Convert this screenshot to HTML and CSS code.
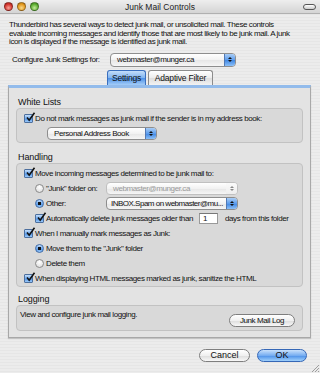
FILE: index.html
```html
<!DOCTYPE html>
<html lang="en">
<head>
  <meta charset="UTF-8" />
  <title>Junk Mail Controls</title>
  <link rel="stylesheet" href="styles.css">
</head>
<body>
  <div class="window">
    <div class="titlebar">
      <div class="lights">
        <span class="light red"></span>
        <span class="light yellow"></span>
        <span class="light green"></span>
      </div>
      <div class="title">Junk Mail Controls</div>
      <span class="pill"></span>
    </div>

    <div class="content">
      <p class="intro">Thunderbird has several ways to detect junk mail, or unsolicited mail. These controls<br>evaluate incoming messages and identify those that are most likely to be junk mail. A junk<br>icon is displayed if the message is identified as junk mail.</p>

      <div class="config">
        <span class="config-label">Configure Junk Settings for:</span>
        <div class="popup popup-account">
          <span class="popup-text">webmaster@munger.ca</span>
          <span class="popup-arrows"><i class="up"></i><i class="down"></i></span>
        </div>
      </div>

      <div class="tabs">
        <span class="tab active">Settings</span>
        <span class="tab">Adaptive Filter</span>
      </div>

      <div class="panel">
        <div class="section-title">White Lists</div>
        <div class="group group-white">
          <div class="row">
            <span class="check on"><svg width="11" height="11" viewBox="0 0 11 11"><path d="M2 5.5 L4.2 8.2 L9.5 0.8" fill="none" stroke="#111" stroke-width="1.6"/></svg></span>
            <span>Do not mark messages as junk mail if the sender is in my address book:</span>
          </div>
          <div class="row sub">
            <div class="popup popup-book">
              <span class="popup-text">Personal Address Book</span>
              <span class="popup-arrows"><i class="up"></i><i class="down"></i></span>
            </div>
          </div>
        </div>

        <div class="section-title gap-big">Handling</div>
        <div class="group group-handling">
          <div class="row">
            <span class="check on"><svg width="11" height="11" viewBox="0 0 11 11"><path d="M2 5.5 L4.2 8.2 L9.5 0.8" fill="none" stroke="#111" stroke-width="1.6"/></svg></span>
            <span>Move incoming messages determined to be junk mail to:</span>
          </div>
          <div class="row sub">
            <span class="radio"></span>
            <span class="radio-label">"Junk" folder on:</span>
            <div class="popup popup-folder disabled">
              <span class="popup-text">webmaster@munger.ca</span>
              <span class="popup-arrows"><i class="up"></i><i class="down"></i></span>
            </div>
          </div>
          <div class="row sub">
            <span class="radio on"></span>
            <span class="radio-label">Other:</span>
            <div class="popup popup-folder">
              <span class="popup-text tight">INBOX.Spam on webmaster@mu...</span>
              <span class="popup-arrows"><i class="up"></i><i class="down"></i></span>
            </div>
          </div>
          <div class="row sub">
            <span class="check on"><svg width="11" height="11" viewBox="0 0 11 11"><path d="M2 5.5 L4.2 8.2 L9.5 0.8" fill="none" stroke="#111" stroke-width="1.6"/></svg></span>
            <span>Automatically delete junk messages older than</span>
            <span class="days-input">1</span>
            <span class="days-label">days from this folder</span>
          </div>
          <div class="row">
            <span class="check on"><svg width="11" height="11" viewBox="0 0 11 11"><path d="M2 5.5 L4.2 8.2 L9.5 0.8" fill="none" stroke="#111" stroke-width="1.6"/></svg></span>
            <span>When I manually mark messages as Junk:</span>
          </div>
          <div class="row sub">
            <span class="radio on"></span>
            <span>Move them to the "Junk" folder</span>
          </div>
          <div class="row sub">
            <span class="radio"></span>
            <span>Delete them</span>
          </div>
          <div class="row">
            <span class="check on"><svg width="11" height="11" viewBox="0 0 11 11"><path d="M2 5.5 L4.2 8.2 L9.5 0.8" fill="none" stroke="#111" stroke-width="1.6"/></svg></span>
            <span>When displaying HTML messages marked as junk, sanitize the HTML</span>
          </div>
        </div>

        <div class="section-title gap-small">Logging</div>
        <div class="group group-logging">
          <span class="log-text">View and configure junk mail logging.</span>
          <span class="btn btn-log">Junk Mail Log</span>
        </div>
      </div>

      <div class="actions">
        <span class="btn btn-cancel">Cancel</span>
        <span class="btn btn-ok">OK</span>
      </div>
    </div>

    <svg class="grip" width="8" height="8" viewBox="0 0 8 8">
      <path d="M1 8 L8 1 M4 8 L8 4 M7 8 L8 7" stroke="#8a8a8a" stroke-width="0.8"/>
    </svg>
  </div>
</body>
</html>
```

FILE: styles.css
```css
* {
  box-sizing: border-box;
  margin: 0;
  padding: 0;
}
body {
  width: 320px;
  height: 373px;
  overflow: hidden;
  font-family: "Liberation Sans", Arial, sans-serif;
  font-size: 8px;
  letter-spacing: -0.4px;
  color: #111;
}
.window {
  position: relative;
  width: 320px;
  height: 373px;
  background: repeating-linear-gradient(180deg, #ececec 0, #ececec 2px, #e6e6e6 2px, #e6e6e6 3px);
}
.titlebar {
  display: flex;
  align-items: center;
  height: 14px;
  padding: 0 4px;
  background: linear-gradient(#eeeeee, #d4d4d4);
  border-bottom: 1px solid #b0b0b0;
}
.lights {
  display: flex;
  gap: 4px;
  width: 60px;
}
.light {
  width: 9px;
  height: 9px;
  border-radius: 50%;
  border: 1px solid rgba(0, 0, 0, 0.35);
}
.red { background: radial-gradient(circle at 50% 70%, #f7a49a, #d4362e 60%, #a8221b); }
.yellow { background: radial-gradient(circle at 50% 70%, #f8d98c, #e39a21 60%, #b8730e); }
.green { background: radial-gradient(circle at 50% 70%, #c4ec9a, #5eaf32 60%, #3f8a1c); }
.title {
  flex: 1;
  text-align: center;
  font-size: 8.5px;
  letter-spacing: 0;
  margin-right: 47px;
  color: #222;
}
.pill {
  width: 13px;
  height: 6px;
  border: 1px solid #555;
  border-radius: 3px;
  background: linear-gradient(#fff, #ccc);
}

.content {
  padding-top: 7px;
}
.intro {
  padding: 0 6px 0 9px;
  line-height: 8.6px;
  white-space: nowrap;
}
.config {
  display: flex;
  align-items: center;
  height: 14px;
  margin-top: 6px;
  padding-left: 12px;
}
.config-label {
  width: 98px;
}

/* popup buttons */
.popup {
  display: flex;
  align-items: center;
  height: 13px;
  background: linear-gradient(#ffffff, #f2f2f2 50%, #e6e6e6 51%, #f6f6f6);
  border: 1px solid #8e8e8e;
  border-radius: 4px;
  overflow: hidden;
}
.popup-text {
  flex: 1;
  padding-left: 6px;
  white-space: nowrap;
  overflow: hidden;
}
.popup-text.tight {
  padding-left: 4px;
  letter-spacing: -0.5px;
}
.popup-arrows {
  display: flex;
  flex: none;
  flex-direction: column;
  align-items: center;
  justify-content: center;
  gap: 1px;
  width: 11px;
  height: 100%;
  background: linear-gradient(#a9cdf6, #5d9ded 50%, #3f86e2 51%, #8cc0f8);
  border-left: 1px solid #5279b4;
}
.popup-arrows i {
  width: 0;
  height: 0;
  border-left: 2px solid transparent;
  border-right: 2px solid transparent;
}
.popup-arrows .up { border-bottom: 2.5px solid #111; }
.popup-arrows .down { border-top: 2.5px solid #111; }
.popup-account {
  width: 126px;
  height: 14px;
}
.popup-book {
  width: 110px;
  margin-left: 12px;
}
.popup-folder {
  width: 132px;
}
.popup.disabled {
  color: #9a9a9a;
  border-color: #c0c0c0;
}
.popup.disabled .popup-arrows {
  background: linear-gradient(#fafafa, #eeeeee);
  border-left: none;
}
.popup.disabled .popup-arrows .up { border-bottom-color: #888; }
.popup.disabled .popup-arrows .down { border-top-color: #888; }

/* tabs */
.tabs {
  display: flex;
  justify-content: center;
  gap: 2px;
  height: 15px;
  margin-top: 3px;
}
.tab {
  display: flex;
  align-items: center;
  justify-content: center;
  height: 15px;
  padding: 0 4px;
  font-size: 8.5px;
  letter-spacing: -0.2px;
  border: 1px solid #8c8c8c;
  border-bottom: none;
  border-radius: 3px 3px 0 0;
  background: linear-gradient(#ffffff, #ececec 50%, #dddddd 51%, #f2f2f2);
}
.tab.active {
  width: 39px;
  border-color: #3a6fbe;
  background: linear-gradient(#c4defa, #7fb3f0 50%, #4c90e6 51%, #a4cdf8);
}
.tab:last-child {
  width: 65px;
}

/* panel */
.panel {
  margin: 0 9px 0 8px;
  height: 253px;
  padding: 8px 7px 6px 7px;
  background: #e3e3e3;
  border: 1px solid #a8a8a8;
  border-top: 3px solid #92bbeb;
  box-shadow: 0 1px 1px rgba(0, 0, 0, 0.15);
}
.section-title {
  height: 12px;
  line-height: 12px;
  padding-left: 2px;
  font-size: 9px;
  letter-spacing: -0.1px;
}
.gap-big { margin-top: 8px; }
.gap-small { margin-top: 6px; }
.group {
  background: #d9d9d9;
  border: 1px solid #c2c2c2;
  border-radius: 4px;
  padding: 3px 7px 0 7px;
}
.group-white {
  display: flex;
  flex-direction: column;
  gap: 1px;
  height: 35px;
}
.group-handling {
  display: flex;
  flex-direction: column;
  gap: 1px;
  height: 124px;
}
.group-logging {
  display: flex;
  justify-content: space-between;
  align-items: flex-start;
  height: 26px;
  padding: 4px 7px 3px 3px;
}
.row {
  display: flex;
  align-items: center;
  gap: 2px;
  height: 14px;
  white-space: nowrap;
}
.row.sub {
  padding-left: 11px;
}

/* checkboxes and radios */
.check {
  position: relative;
  flex: none;
  width: 9px;
  height: 9px;
  border: 1px solid #4d6f9e;
  border-radius: 1px;
  background: linear-gradient(#c6dffa, #6aa6ee 50%, #4a8fe6 51%, #9ccaf8);
}
.check svg {
  position: absolute;
  left: 0;
  top: -3px;
}
.radio {
  flex: none;
  width: 9px;
  height: 9px;
  border-radius: 50%;
  border: 1px solid #8a8a8a;
  background: radial-gradient(circle at 50% 30%, #ffffff, #e4e4e4 70%);
}
.radio.on {
  border-color: #3f6aa6;
  background: radial-gradient(circle, #111 0, #111 1.6px, transparent 2px), linear-gradient(#c6dffa, #6aa6ee 50%, #4a8fe6 51%, #9ccaf8);
}
.radio-label {
  width: 58px;
}
.days-input {
  width: 19px;
  height: 11px;
  margin-left: 4px;
  padding-left: 3px;
  line-height: 10px;
  background: #fff;
  border: 1px solid #999;
  border-top-color: #777;
}
.days-label {
  margin-left: 5px;
}

/* buttons */
.btn {
  display: flex;
  align-items: center;
  justify-content: center;
  height: 13px;
  border: 1px solid #7e7e7e;
  border-radius: 7px;
  background: linear-gradient(#ffffff, #f0f0f0 50%, #dcdcdc 51%, #f8f8f8);
  white-space: nowrap;
}
.btn-log {
  width: 66px;
  margin-top: 4px;
}
.actions {
  display: flex;
  justify-content: flex-end;
  gap: 7px;
  margin-top: 11px;
  padding-right: 13px;
}
.btn-cancel {
  width: 51px;
  font-size: 9px;
  letter-spacing: 0;
}
.btn-ok {
  width: 50px;
  font-size: 9px;
  letter-spacing: 0;
  border-color: #3567b6;
  background: linear-gradient(#c8e0fb, #76adf1 50%, #4b8fe8 51%, #9fd0fb);
}
.grip {
  position: absolute;
  right: 1px;
  bottom: 1px;
}
```
